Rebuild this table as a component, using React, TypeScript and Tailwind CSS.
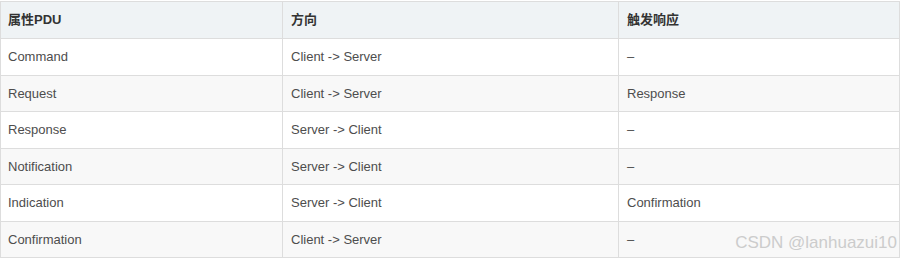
import React from "react";

const rows: [string, string, string][] = [
  ["Command", "Client -> Server", "–"],
  ["Request", "Client -> Server", "Response"],
  ["Response", "Server -> Client", "–"],
  ["Notification", "Server -> Client", "–"],
  ["Indication", "Server -> Client", "Confirmation"],
  ["Confirmation", "Client -> Server", "–"],
];

export default function App() {
  return (
    <div
      className="relative w-[900px] h-[259px] bg-white pt-px overflow-hidden"
      style={{ fontFamily: '"Liberation Sans", Arial, "Noto Sans CJK SC", sans-serif' }}
    >
      <table className="w-[899px] table-fixed border-collapse text-[13px] text-[#4d4d4d]">
        <colgroup>
          <col className="w-[282px]" />
          <col className="w-[336px]" />
          <col className="w-[281px]" />
        </colgroup>
        <thead>
          <tr className="h-[37px] bg-[#eff3f5]">
            <th className="border border-[#dddddd] pl-[7px] pr-2 text-left font-bold text-[#333333]">属性PDU</th>
            <th className="border border-[#dddddd] px-2 text-left font-bold text-[#333333]">方向</th>
            <th className="border border-[#dddddd] px-2 text-left font-bold text-[#333333]">触发响应</th>
          </tr>
        </thead>
        <tbody>
          {rows.map((r, i) => (
            <tr key={i} className={`h-[36.5px] ${i % 2 === 1 ? "bg-[#f8f8f8]" : "bg-white"}`}>
              <td className="border border-[#dddddd] pl-[7px] pr-2">{r[0]}</td>
              <td className="border border-[#dddddd] px-2">{r[1]}</td>
              <td className="border border-[#dddddd] px-2">{r[2]}</td>
            </tr>
          ))}
        </tbody>
      </table>
      <div className="absolute right-[3px] top-[232px] text-[17px] leading-[22px] text-[#cccccc]">
        CSDN @lanhuazui10
      </div>
    </div>
  );
}
